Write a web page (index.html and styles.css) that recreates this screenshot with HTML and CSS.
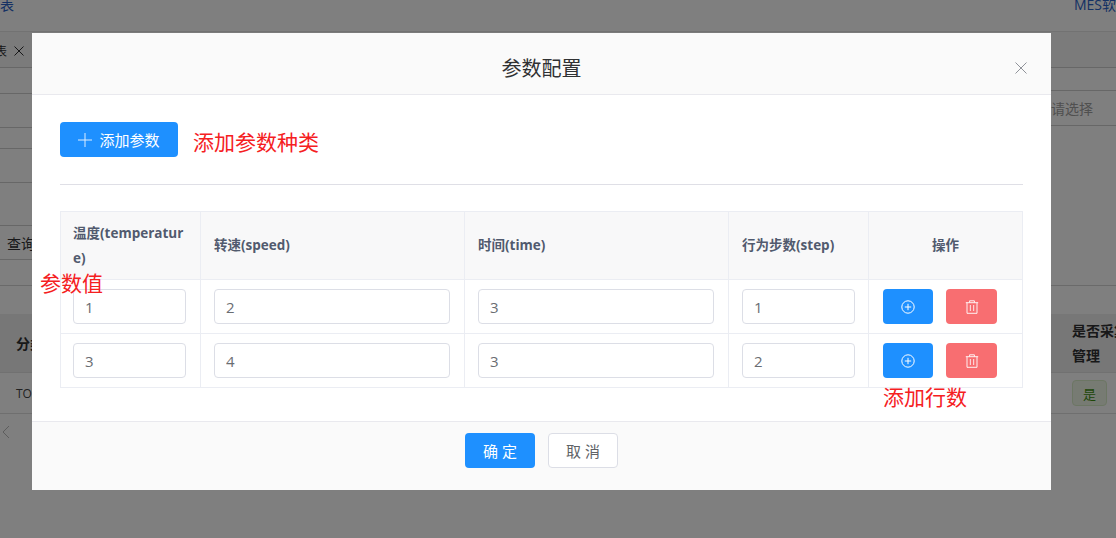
FILE: index.html
```html
<!DOCTYPE html>
<html lang="zh">
<head>
<meta charset="utf-8">
<title>参数配置</title>
<link rel="stylesheet" href="styles.css">
</head>
<body>
<div class="page">
  <div class="top"><span class="crumb">表</span><span class="mes">MES软</span></div>
  <div class="tabs"><span class="tab">表</span><svg class="tabx" viewBox="0 0 10 10" width="10" height="10"><path d="M.5.5l9 9M9.5.5l-9 9" fill="none" stroke="#303133"/></svg></div>
  <div class="filters">
    <div class="f-left">
      <div class="fl a"></div>
      <div class="fl b"></div>
      <div class="fl c"></div>
      <div class="fl b"></div>
      <div class="fl d"></div>
      <div class="fl b"><span class="query">查询</span></div>
      <div class="fl e"></div>
    </div>
    <div class="f-right"><div class="select">请选择</div></div>
  </div>
  <div class="gap-band"></div>
  <div class="thead"><b class="t-first">分类</b><b class="cap">是否采集<br>管理</b></div>
  <div class="tbody"><span class="t-first">TOP</span><span class="yes">是</span></div>
  <div class="pager"><svg viewBox="0 0 8 14" width="8" height="14"><path d="M7 1L1 7l6 6" fill="none" stroke="#bbb"/></svg></div>
</div>
<div class="mask"></div>
<section class="modal">
  <header class="m-head">
    <h2>参数配置</h2>
    <svg class="close" viewBox="0 0 12 12" width="12" height="12"><path d="M.5.5l11 11M11.5.5l-11 11" fill="none" stroke="#8f9299"/></svg>
  </header>
  <div class="m-body">
    <div class="add-row">
      <button class="btn primary add">
        <svg viewBox="0 0 14 14" width="14" height="14"><path d="M7 0v14M0 7h14" stroke="#fff" opacity=".85"/></svg>
        <span>添加参数</span>
      </button>
      <span class="note note-kind">添加参数种类</span>
    </div>
    <hr class="divider">
    <div class="table-wrap">
      <span class="note note-val">参数值</span>
      <span class="note note-rows">添加行数</span>
      <table>
        <colgroup><col class="c1"><col class="c2"><col class="c2"><col class="c1"><col class="c5"></colgroup>
        <thead>
          <tr><th>温度(temperature)</th><th>转速(speed)</th><th>时间(time)</th><th>行为步数(step)</th><th class="center">操作</th></tr>
        </thead>
        <tbody>
          <tr>
            <td><input value="1"></td><td><input value="2"></td><td><input value="3"></td><td><input value="1"></td>
            <td><div class="ops">
              <button class="op primary"><svg viewBox="0 0 14 14" width="14" height="14"><circle cx="7" cy="7" r="6.2" fill="none" stroke="#fff"/><path d="M7 3.8v6.4M3.8 7h6.4" stroke="#fff"/></svg></button>
              <button class="op danger"><svg viewBox="0 0 14 14" width="14" height="14"><path d="M.8 2.7h12.4M4.6 2.5V.8h4.8v1.7M2 2.7v10.6h10V2.7" fill="none" stroke="#fff" opacity=".9"/><path d="M5.4 5v6M8.6 5v6" stroke="#fff" stroke-width="1.2" opacity=".7"/></svg></button>
            </div></td>
          </tr>
          <tr>
            <td><input value="3"></td><td><input value="4"></td><td><input value="3"></td><td><input value="2"></td>
            <td><div class="ops">
              <button class="op primary"><svg viewBox="0 0 14 14" width="14" height="14"><circle cx="7" cy="7" r="6.2" fill="none" stroke="#fff"/><path d="M7 3.8v6.4M3.8 7h6.4" stroke="#fff"/></svg></button>
              <button class="op danger"><svg viewBox="0 0 14 14" width="14" height="14"><path d="M.8 2.7h12.4M4.6 2.5V.8h4.8v1.7M2 2.7v10.6h10V2.7" fill="none" stroke="#fff" opacity=".9"/><path d="M5.4 5v6M8.6 5v6" stroke="#fff" stroke-width="1.2" opacity=".7"/></svg></button>
            </div></td>
          </tr>
        </tbody>
      </table>
    </div>
  </div>
  <footer class="m-foot">
    <button class="btn primary foot">确 定</button>
    <button class="btn plain foot">取 消</button>
  </footer>
</section>
</body>
</html>
```
FILE: styles.css
```css
* { box-sizing: border-box; }
html, body { margin: 0; height: 100%; overflow: hidden; }
body { font-family: "Open Sans", "Noto Sans CJK SC", sans-serif; background: #fff; color: #606266; }
button { font-family: inherit; border: 0; cursor: pointer; }

/* page behind the dialog */
.page { height: 538px; overflow: hidden; display: flex; flex-direction: column; font-size: 14px; }
.top { height: 32px; flex: none; display: flex; justify-content: space-between; align-items: flex-start; color: #2a62c8; border-bottom: 1px solid #e4e4e4; line-height: 10px; }
.tabs { height: 36px; flex: none; border-bottom: 1px solid #cfcfcf; display: flex; align-items: center; gap: 7px; color: #303133; font-size: 12px; padding-top: 2px; background: #f6f6f6; }
.tab { margin-left: -5px; }
.filters { height: 218px; flex: none; display: flex; justify-content: space-between; border-bottom: 1px solid #d4d4d4; }
.f-left { width: 32px; }
.fl { border-bottom: 1px solid #cfcfcf; display: flex; align-items: center; white-space: nowrap; }
.fl.e { border-bottom: 0; }
.a { height: 26px; }
.b { height: 34px; }
.c { height: 21px; }
.d { height: 43px; }
.e { height: 26px; }
.query { margin-left: 7px; color: #303133; }
.f-right { width: 65px; padding-top: 22px; }
.select { height: 36px; border-top: 1px solid #cfcfcf; border-bottom: 1px solid #cfcfcf; display: flex; align-items: center; color: #a0a0a0; }
.gap-band { height: 28px; flex: none; }
.thead { height: 59px; flex: none; background: #eee; border-bottom: 1px solid #e2e2e2; display: flex; justify-content: space-between; align-items: center; font-size: 14px; color: #303133; line-height: 25px; }
.t-first { margin-left: 16px; }
.cap { width: 44px; white-space: nowrap; }
.tbody { height: 41px; flex: none; border-bottom: 1px solid #dedede; display: flex; justify-content: space-between; align-items: center; font-size: 12px; color: #444; }
.yes { width: 35px; height: 26px; margin-right: 9px; border: 1px solid #d9ecc8; border-radius: 4px; background: #eef7e6; color: #3e8e10; font-size: 13px; display: flex; align-items: center; justify-content: center; }
.pager { padding: 11px 0 0 2px; line-height: 0; }

.mask { position: fixed; inset: 0; background: rgba(0, 0, 0, .5); }

/* dialog */
.modal { position: absolute; left: 32px; top: 33px; width: 1019px; height: 457px; background: #fff; display: flex; flex-direction: column; }
.m-head { height: 62px; flex: none; background: #fafafa; border-bottom: 1px solid #e9e9ee; display: flex; align-items: center; justify-content: center; position: relative; padding-top: 8px; }
.m-head h2 { margin: 0; font-size: 20px; font-weight: 400; color: #303133; line-height: 26px; font-family: "Noto Sans CJK SC", sans-serif; }
.close { position: absolute; right: 24px; top: 29px; }
.m-body { flex: 1; padding: 27px 28px 0; }
.add-row { display: flex; align-items: center; gap: 15px; }
.btn { border-radius: 4px; font-size: 15px; display: inline-flex; align-items: center; justify-content: center; height: 35px; }
.primary { background: #1e90ff; color: #fff; }
.add { width: 118px; gap: 7px; font-size: 15px; }
.note { color: #f5201f; font-size: 21px; line-height: 26px; white-space: nowrap; font-weight: 400; }
.note-kind { padding-top: 5px; }
.divider { margin: 27px 0 26px; border: 0; border-top: 1px solid #dfdfe6; }
.table-wrap { position: relative; width: 963px; }
.note-val { position: absolute; left: -20px; top: 59px; z-index: 1; }
.note-rows { position: absolute; left: 823px; top: 173px; }
table { border-collapse: collapse; table-layout: fixed; width: 962px; }
.c1 { width: 140px; }
.c2 { width: 264px; }
.c5 { width: 154px; }
th, td { border: 1px solid #ebedf3; padding: 0 13px; }
th:first-child, td:first-child { padding-left: 12px; padding-right: 14px; }
td:nth-child(2), td:nth-child(3) { padding-right: 14px; }
th { height: 68px; background: #f8f8f9; color: #515a6e; font-size: 13.5px; font-weight: 700; text-align: left; line-height: 25px; word-break: break-all; }
th.center { text-align: center; }
td { height: 54px; }
input { display: block; width: 100%; height: 35px; padding: 1px 11px 0; border: 1px solid #dcdee6; border-radius: 4px; font: 15px "Open Sans", sans-serif; color: #6a6d72; background: #fff; }
.ops { display: flex; gap: 13px; padding-left: 1px; }
.op { width: 50px; height: 35px; border-radius: 4px; display: flex; align-items: center; justify-content: center; padding: 0; }
.danger { background: #f86e71; width: 51px; }
.m-foot { height: 69px; flex: none; background: #fafafa; border-top: 1px solid #e9e9ee; display: flex; justify-content: center; align-items: flex-start; gap: 13px; padding-top: 11px; }
.foot { width: 70px; font-weight: 400; }
.plain { background: #fff; border: 1px solid #dcdee6; color: #606266; }
```
